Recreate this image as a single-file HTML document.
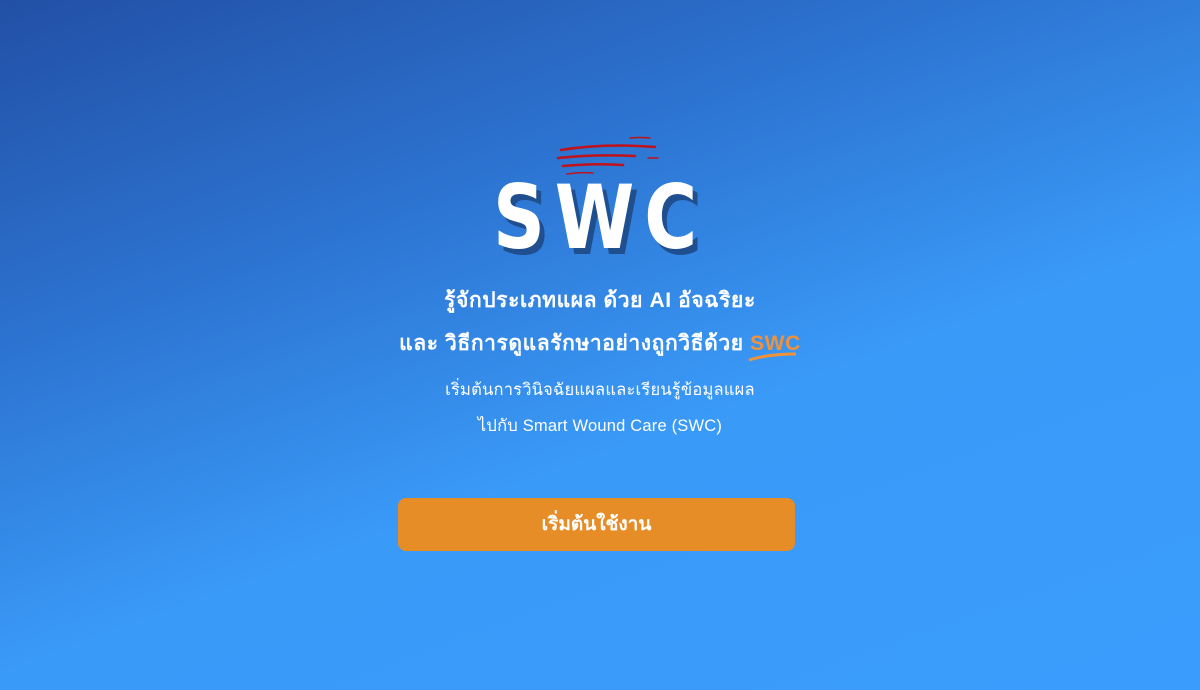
<!DOCTYPE html>
<html><head><meta charset="utf-8"><style>
html,body{margin:0;padding:0;width:1200px;height:690px;overflow:hidden}
body{background:linear-gradient(160deg,#2250a6 0%,#2c72cf 30%,#3a9af8 60%,#3a9cfc 100%);font-family:"Liberation Sans","DejaVu Sans",sans-serif;color:#fff;position:relative}
.logo{position:absolute;left:493px;top:172px;font-weight:900;font-size:88px;letter-spacing:12px;color:#fff;text-shadow:6px 6px 0 #1f4f8e;font-family:"DejaVu Sans","Liberation Sans",sans-serif;line-height:92px;transform-origin:0 0;transform:scale(0.82,1)}
.t{position:absolute;left:0;width:1200px;text-align:center}
.h{font-weight:bold;font-size:21px;letter-spacing:0.6px}
.s{font-size:16.5px;letter-spacing:0.2px}
.btn{position:absolute;left:398px;top:498px;width:397px;height:53px;background:#e68d27;border-radius:8px;text-align:center;line-height:53px;font-weight:bold;font-size:19px}
.sw{color:#f0923a;position:relative}
</style></head><body>
<svg style="position:absolute;left:555px;top:134px" width="120" height="42">
<g stroke="#c0121a" stroke-linecap="round" fill="none">
<path d="M75 4 Q85 3 95 4" stroke-width="1.5"/>
<path d="M6 16 Q50 9 100 13" stroke-width="2.5"/>
<path d="M3 24 Q40 20 80 22" stroke-width="2.5"/>
<path d="M93 24 L103 24" stroke-width="1.5"/>
<path d="M8 32 Q40 29 68 31" stroke-width="2.5"/>
<path d="M12 40 Q25 38 38 39" stroke-width="1.5"/>
</g></svg>
<div class="logo">SWC</div>
<div class="t h" style="top:284px">รู้จักประเภทแผล ด้วย AI อัจฉริยะ</div>
<div class="t h" style="top:327px">และ วิธีการดูแลรักษาอย่างถูกวิธีด้วย <span class="sw">SWC<svg style="position:absolute;left:-2px;top:20px" width="50" height="10"><path d="M1 8 Q20 2 48 2" stroke="#f0923a" stroke-width="3" fill="none"/></svg></span></div>
<div class="t s" style="top:377px">เริ่มต้นการวินิจฉัยแผลและเรียนรู้ข้อมูลแผล</div>
<div class="t s" style="top:413px">ไปกับ Smart Wound Care (SWC)</div>
<div class="btn">เริ่มต้นใช้งาน</div>
</body></html>
